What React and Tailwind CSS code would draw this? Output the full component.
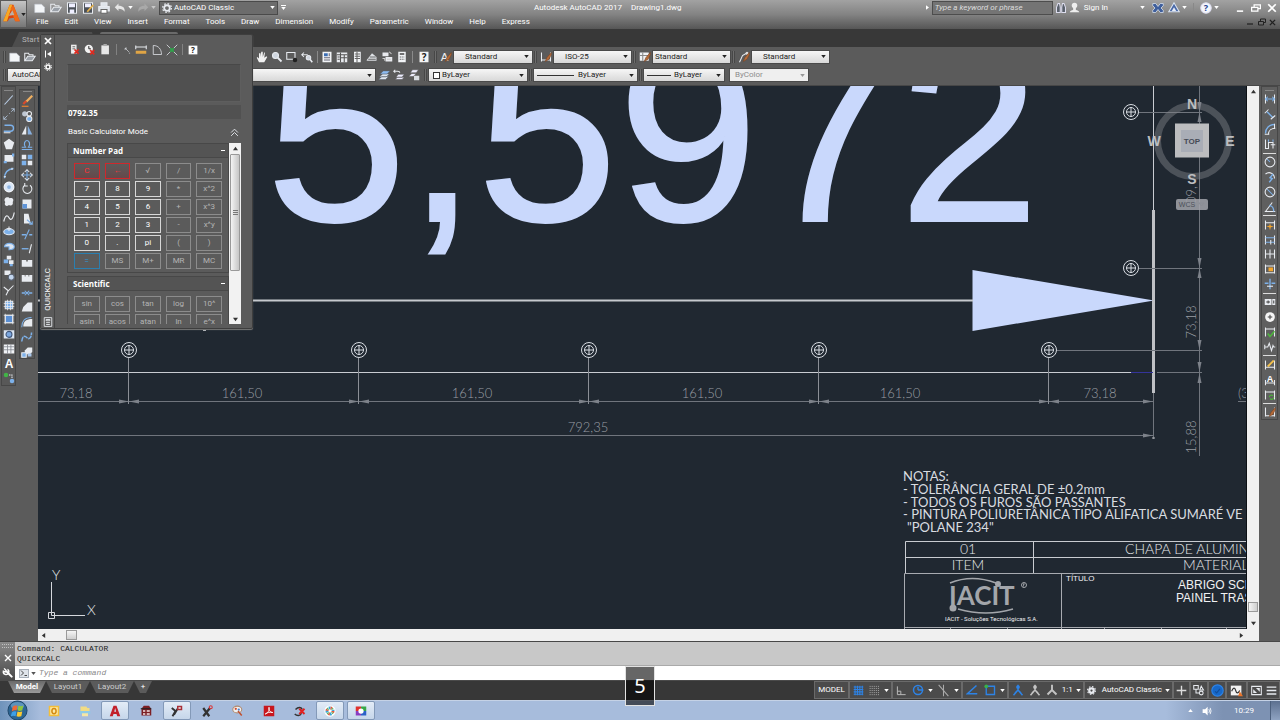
import React from "react";

const W = "#e8ebf0";
const B = "#7db1ea";

function Ico({ children, s = 12 }) {
  return (
    <svg viewBox="0 0 16 16" width={s} height={s} fill="none" stroke={W} strokeWidth="1.4" className="shrink-0" aria-hidden="true">
      {children}
    </svg>
  );
}

function Tool({ label, children, className = "w-[15px]", s }) {
  return (
    <button type="button" aria-label={label} className={`flex shrink-0 items-center justify-center ${className}`}>
      <Ico s={s}>{children}</Ico>
    </button>
  );
}

const Caret = ({ className = "text-white" }) => (
  <svg viewBox="0 0 6 4" className={`h-[3px] w-[5px] shrink-0 ${className}`} aria-hidden="true">
    <path d="M0 0h6L3 4z" fill="currentColor" />
  </svg>
);

const fill = (c) => ({ fill: c, stroke: "none" });

/* Shared drawings */
const NewDoc = <path d="M1 3h9l4 4v7H1z" fill="#f4f6f8" stroke="#c9ced6" strokeWidth=".8" />;
const OpenDoc = (
  <>
    <path d="M1 13V3h5l1 2h5v2" />
    <path d="M1 13l4-6h10l-4 6z" fill="#9aa0a8" />
  </>
);
const Layers = (
  <>
    <path d="M1 14l4-4h9l-4 4zM2 10.500l4-4h9l-4 4z" fill="#dfe6ef" stroke="#59616c" strokeWidth=".7" />
    <path d="M3 6.500l4-4h9l-4 4z" fill="#8dbcf2" stroke="#59616c" strokeWidth=".7" />
  </>
);
const Brush = <path d="M15 2l-6 7-2 5 5-3 3-6z" fill="#b56a38" stroke="#7a4524" strokeWidth=".8" />;

const drawTools = [
  ["Line", <path d="M2 14L13 2" stroke="#bcd0ea" />],
  ["Construction line", <path d="M1 15l5-5M8 8l1-1M11 5l4-4M1 11v4h4M11 1h4v4" strokeWidth="1" stroke="#bcd0ea" />],
  ["Polyline", <><path d="M2 3h8a4 4 0 010 8H1" stroke={B} strokeWidth="1.800" /><path d="M1 13h9" /></>],
  ["Polygon", <path d="M8 1l7 5-3 9H4L1 6z" {...fill(W)} />],
  ["Rectangle", <><path d="M2 4h12v9H2z" {...fill(W)} /><path d="M1 12h4v3H1zM12 2h3v4h-3z" {...fill(B)} /></>],
  ["Arc", <><path d="M2 15C2 8 6 3 14 2" stroke={B} strokeWidth="1.800" /><path d="M1 13h3M12 1v3" /></>],
  ["Circle", <><circle cx="8" cy="8" r="6.500" fill="#d9e6f6" stroke="#f4f7fb" /><circle cx="8" cy="8" r="2.500" {...fill("#8fb5e2")} /></>],
  ["Revision cloud", <path d="M4 2c3-1 4 0 5 1 4-1 6 2 4 5 1 4-2 6-5 4-4 3-7 0-5-4-2-2-1-5 1-6z" {...fill(W)} />],
  ["Spline", <path d="M1 14c2-9 5-9 7-5s5 3 7-7" strokeWidth="1.600" />],
  ["Ellipse", <><ellipse cx="8" cy="9" rx="7" ry="4" fill={B} stroke="#dfe9f6" /><path d="M8 2v6M5 5h6" /></>],
  ["Ellipse arc", <path d="M2 9c0-6 13-6 13 0 0 3-4 4-7 4v-4z" fill="#dbe5f2" stroke={B} />],
  ["Insert block", <><path d="M5 1h6v5H5zM8 7h6v5H8z" {...fill(W)} /><path d="M1 6h6v5H1zM9 12h4v3H9z" {...fill(B)} /></>],
  ["Make block", <><path d="M2 2h8v6H2z" {...fill(W)} /><circle cx="11" cy="11" r="4" fill="#c2d5ee" stroke="#586170" /></>],
  ["Point", <path d="M1 4l6 5 7-7M7 9l-3 6" />],
  ["Hatch", <><path d="M3 3h10v10H3z" fill={B} /><path d="M1 6h14M1 10h14M6 1v14M10 1v14" strokeWidth="1" /></>],
  ["Gradient", <><path d="M3 3h10v10H3z" fill="#5a8fd4" /><path d="M1 3h14M1 13h14M3 1v14M13 1v14" strokeWidth="1" /></>],
  ["Region", <><path d="M1 3h14v11H1z" fill="#dbe5f2" stroke="none" /><circle cx="8" cy="8.500" r="4" fill="#7ba7df" stroke="#40567a" /></>],
  ["Table", <><path d="M1 2h14v12H1z" {...fill("#f1f3f6")} /><path d="M1 5h14M1 9h14M6 2v12M10.500 2v12" stroke="#7d828a" strokeWidth="1" /></>],
  ["Multiline text", <text x="8" y="14" textAnchor="middle" fontSize="16" fontWeight="700" fontFamily="Liberation Sans, sans-serif" {...fill("#fff")}>A</text>],
  ["Add selected", <><circle cx="4" cy="4" r="3" {...fill("#41b446")} /><path d="M8 4h4v4" strokeDasharray="2 1" /><circle cx="12" cy="12" r="3" {...fill(B)} /></>],
];

const modifyTools = [
  ["Erase", <><path d="M15 1L7 9" stroke="#f0b060" strokeWidth="3" /><path d="M7 8l-4 4" stroke="#d84b2c" strokeWidth="3" /><path d="M1 15h9" stroke="#ff8a2a" /></>],
  ["Copy", <><circle cx="5" cy="5" r="3.500" {...fill("#bfc7d2")} /><circle cx="11" cy="5" r="3" stroke={W} /><circle cx="11" cy="12" r="3.500" fill={B} /></>],
  ["Mirror", <><path d="M7 2v12H1z" {...fill(W)} /><path d="M9 2v12h6z" {...fill("#86aede")} /></>],
  ["Offset", <path d="M1 14h14M1 11h5C3 7 5 2 8 2s5 5 2 9h5" stroke={B} strokeWidth="1.600" />],
  ["Array", <><path d="M1 1h6v6H1zM9 9h6v6H9z" {...fill(W)} /><path d="M9 1h6v6H9zM1 9h6v6H1z" {...fill(B)} /></>],
  ["Move", <><path d="M8 1v14M1 8h14" stroke={B} /><path d="M5 4l3-3 3 3M5 12l3 3 3-3M4 5L1 8l3 3M12 5l3 3-3 3" /></>],
  ["Rotate", <path d="M12 3a6 6 0 11-7 0M5 0v4h4" />],
  ["Scale", <><path d="M2 2h12v12H2z" {...fill(W)} /><path d="M2 8h6v6H2z" {...fill("#5f94d8")} /></>],
  ["Stretch", <><path d="M4 1h6l3 13H4z" {...fill(W)} /><path d="M8 9l7 6M15 11v4h-4" stroke={B} /></>],
  ["Trim", <><path d="M1 9h6M11 9h4" stroke={B} strokeWidth="1.800" /><path d="M5 15L11 2" stroke={B} /></>],
  ["Extend", <><path d="M1 9h9" stroke={B} strokeWidth="1.800" /><path d="M11 15l3-12" /></>],
  ["Break at point", <path d="M1 4h6v2h2V4h6v9H1z" {...fill(W)} />],
  ["Break", <path d="M1 4h4v2h1V4h4v2h1V4h4v9H1z" {...fill(W)} />],
  ["Join", <><path d="M1 8h5M10 8h5" stroke={B} strokeWidth="2" /><path d="M5 5l3 3-3 3M11 5L8 8l3 3" stroke={B} /></>],
  ["Chamfer", <path d="M1 14L3 8l6-6h6v12z" {...fill(W)} />],
  ["Fillet", <><path d="M3 14c0-7 4-10 12-10v10z" {...fill(W)} /><path d="M1 15C1 7 5 2 14 2" stroke={B} /></>],
  ["Blend curves", <path d="M1 14c1-8 4-8 7-5s6 0 6-7" stroke={B} strokeWidth="2" strokeDasharray="6 1" />],
  ["Explode", <><path d="M5 6l4-4h6v6l-3 3H5z" {...fill(W)} /><path d="M1 9h6v6H1z" fill={B} /><path d="M9 10h5v4H9z" {...fill("#a8c5e9")} /></>],
];

const H = <path d="M2 2v12M14 2v12" />;
const dimTools = [
  ["Linear", <>{H}<path d="M2 8h12M5 5L2 8l3 3M11 5l3 3-3 3" stroke={B} /></>],
  ["Aligned", <><path d="M4 5l8 8" stroke={B} strokeWidth="2" /><path d="M1 7l5-5M9 15l6-5" /></>],
  ["Arc length", <><path d="M2 14C2 7 7 2 14 2" stroke={B} strokeWidth="1.800" /><path d="M6 15c0-5 4-8 9-8" /><path d="M1 15h6M14 1v7" /></>],
  ["Ordinate", <><path d="M2 2v12h4V6h6v8M9 9h6" /><path d="M6 2v3M12 2v3" stroke={B} /></>],
  null,
  ["Radius", <><circle cx="8" cy="8" r="6.500" /><path d="M8 8L4 4" stroke={B} /></>],
  ["Jogged", <><path d="M2 4c5-4 12-1 12 6" /><path d="M12 4L8 9l3 1-4 5" stroke={B} strokeWidth="1.800" /></>],
  ["Diameter", <><circle cx="8" cy="8" r="6.500" /><path d="M4 4l8 8" stroke={B} /></>],
  ["Angular", <><path d="M1 14h14M2 14L11 2" /><path d="M7 6c4 0 6 4 6 8" stroke={B} strokeWidth="1.800" /></>],
  null,
  ["Quick dimension", <>{H}<path d="M2 5h12" /><path d="M8 6l1 3 4 1-4 1-1 4-1-4-4-1 4-1z" {...fill("#f3a52c")} /></>],
  ["Baseline", <>{H}<path d="M2 5h12M2 11h12" stroke={B} /><path d="M9 8v6" /></>],
  ["Continue", <>{H}<path d="M2 8h12M8 2v12" /></>],
  ["Dimension space", <>{H}<path d="M2 4h12M2 13h12" /><path d="M6 6h6v5H6z" {...fill("#f3a52c")} /></>],
  ["Dimension break", <><path d="M1 7h5M10 7h5M8 1v14" stroke={B} strokeWidth="1.800" /><path d="M4 11h8" /></>],
  null,
  ["Tolerance", <><path d="M1 4h9v8H1zM11 4h4v8h-4z" {...fill(W)} /><path d="M3 8h5M5.500 6v4M13 6v4" stroke="#444" /></>],
  ["Center mark", <><circle cx="8" cy="8" r="6.500" {...fill("#f5f5f5")} /><path d="M8 5v6M5 8h6" stroke="#444" /></>],
  ["Inspection", <>{H}<path d="M2 4h12" /><path d="M5 10l3 4 6-7" stroke="#4db53c" strokeWidth="2" /></>],
  ["Jogged linear", <path d="M1 5v6M1 8h4l2-5 3 10 2-7 1 2h2" />],
  null,
  ["Dimension edit", <>{H}<path d="M2 11h12" /><path d="M5 10l8-8" stroke="#f3c04c" strokeWidth="2.500" /></>],
  ["Dimension text edit", <><path d="M2 8v7M14 8v7M2 12h12" /><text x="8" y="10" textAnchor="middle" fontSize="12" fontWeight="700" fontFamily="Liberation Sans, sans-serif" {...fill("#fff")}>A</text></>],
  ["Dimension update", <>{H}<path d="M2 4h12" /><path d="M7 11a3 3 0 015-2M13 11a3 3 0 01-5 2" stroke="#4db53c" /></>],
  null,
  ["Dimension style", <>{H}<path d="M2 13h12" />{Brush}</>],
];

const Hand = <path d="M4 15L1 9l1-1 2 2V3h2v5l1-7h2v7l2-6h1l-1 7 3-2 1 1-4 7z" {...fill("#f2f2f2")} />;
const Zoom = <><circle cx="6" cy="6" r="4" fill="#cfd6df" /><path d="M9 9l5 5" strokeWidth="2.400" /></>;

function Combo({ label, value, className, pad = "pl-2", line, swatch, disabled }) {
  return (
    <div className={`relative flex h-[14px] shrink-0 items-center border border-[#4a4a4a] ${disabled ? "bg-[#efefef] text-[#8c8c8c]" : "bg-linear-to-b from-[#f6f6f6] to-[#d8d8d8] text-[#1c1c1c]"} ${className}`}>
      {line && <span className={`ml-[3px] h-px shrink-0 bg-[#333] ${line}`} />}
      {swatch && <span className="ml-[4px] size-[7px] shrink-0 border border-[#333] bg-white" />}
      <select aria-label={label} disabled={disabled} className={`h-full min-w-0 flex-1 appearance-none bg-transparent text-[8px] leading-[12px] outline-none ${pad}`}>
        <option>{value}</option>
      </select>
      <span className="pointer-events-none absolute right-[3px]"><Caret className={disabled ? "text-[#999]" : "text-[#222]"} /></span>
    </div>
  );
}

const Grip = () => <span className="mx-px h-[12px] w-[3px] shrink-0 border-x border-[#474747] bg-[#6d6d6d]" />;
const Sep = () => <span className="mx-px h-[12px] w-px shrink-0 bg-[#8a8a8a]" />;

function Header() {
  const menus = ["File", "Edit", "View", "Insert", "Format", "Tools", "Draw", "Dimension", "Modify", "Parametric", "Window", "Help", "Express"];
  return (
    <header className="flex h-[29px] bg-linear-to-b from-[#a2a2a2] via-[#838383] to-[#565656] text-white">
      <button type="button" aria-label="Application menu" className="flex h-[28px] w-[27px] shrink-0 items-center border border-[#5a5a5a] bg-linear-to-b from-[#c4c4c4] to-[#777] pl-px">
        <svg viewBox="0 0 20 24" className="h-[22px] w-[19px]" aria-hidden="true">
          <path d="M1 20L8 2h4l7 18h-5l-1.500-4-5 1L6 20z" fill="#d9420f" />
          <path d="M1 20L8 2h3L5 20z" fill="#f7a823" />
          <path d="M12 2l7 18h-5L9 6z" fill="#ee6a17" />
          <path d="M7 14l4-6 2 5z" fill="#b9b0a8" />
        </svg>
        <Caret className="text-[#222]" />
      </button>
      <div className="flex min-w-0 flex-1 flex-col">
        <div className="relative flex h-[15px] items-center">
          <div className="flex items-center pl-[5px]">
            <Tool label="New" className="w-[16px]">{NewDoc}</Tool>
            <Tool label="Open" className="w-[16px]">{OpenDoc}</Tool>
            <Tool label="Save" className="w-[16px]"><path d="M2 1h12v14H2z" fill="#4a5058" /><path d="M4 2h8v5H4zM5 10h6v5H5z" {...fill("#eef")} /></Tool>
            <Tool label="Save as" className="w-[16px]"><path d="M2 1h12v14H2z" fill="#4a5058" /><path d="M4 2h8v5H4z" {...fill("#eef")} /><path d="M7 13l8-9" stroke="#e2b04c" strokeWidth="2.500" /></Tool>
            <Tool label="Plot" className="w-[16px]"><path d="M4 1h8v5H4zM1 6h14v6H1z" fill="#dfe4ea" /><path d="M4 10h8v5H4z" fill="#fff" stroke="#666" /></Tool>
            <Tool label="Undo" className="w-[16px]"><path d="M1 7l5-5v3c6 0 9 3 8 8-2-3-4-4-8-4v3z" {...fill("#e6e6e6")} /></Tool>
            <Caret />
            <Tool label="Redo" className="ml-[2px] w-[16px]"><path d="M15 7l-5-5v3C4 5 1 8 2 13c2-3 4-4 8-4v3z" {...fill("#a9a9a9")} /></Tool>
            <Caret className="text-[#c8c8c8]" />
            <div className="relative ml-[3px] flex h-[14px] w-[119px] items-center border border-[#4a4a4a] bg-[#6c6c6c] pl-[2px]">
              <Ico s={10}><circle cx="8" cy="8" r="4.500" strokeWidth="3" /><circle cx="8" cy="8" r="7" strokeWidth="2" strokeDasharray="2.700 2.800" /></Ico>
              <select aria-label="Workspace" className="h-full min-w-0 flex-1 appearance-none bg-transparent pl-[2px] text-[8px] leading-[12px] outline-none">
                <option>AutoCAD Classic</option>
              </select>
              <span className="pointer-events-none absolute right-[2px]"><Caret /></span>
            </div>
            <button type="button" aria-label="Customize" className="ml-[3px] flex flex-col items-center gap-px"><span className="h-px w-[5px] bg-white" /><Caret /></button>
          </div>
          <div className="ml-[248px] flex gap-[9px] text-[8px] whitespace-nowrap"><span>Autodesk AutoCAD 2017</span><span>Drawing1.dwg</span></div>
          <div className="ml-auto flex items-center">
            <svg viewBox="0 0 4 6" className="mr-[3px] h-[5px] w-[3px]" aria-hidden="true"><path d="M0 0v6l4-3z" fill="#fff" /></svg>
            <input aria-label="Search" placeholder="Type a keyword or phrase" className="h-[14px] w-[121px] border border-[#4d4d4d] bg-[#747474] pl-[2px] text-[8px] italic outline-none placeholder:text-[#dcdcdc]" />
            <Tool label="Find" className="ml-[1px] w-[15px]"><path d="M2 14V7l2-5h2l1 5v7zM9 14V7l1-5h2l2 5v7z" fill="#59606b" stroke="#dde" /></Tool>
            <button type="button" className="flex items-center gap-[4px] text-[8px] whitespace-nowrap">
              <Ico s={11}><circle cx="8" cy="5" r="4" {...fill("#eee")} /><path d="M1 15c1-5 13-5 14 0zM6 8h4v4H6z" {...fill("#eee")} /></Ico>
              Sign In
            </button>
            <span className="ml-[32px] flex"><Caret /></span>
            <Tool label="Exchange" className="ml-[5px] w-[16px]"><path d="M1 2h4l3 4 3-4h4v3l-3 3 3 3v3h-4l-3-4-3 4H1v-3l3-3-3-3z" fill="#3f5f9c" stroke="#dbe4f2" strokeWidth="1" /></Tool>
            <Tool label="Stay connected" className="w-[16px]"><path d="M8 1l7 12H1z" fill="#4868a6" stroke="#dbe4f2" /><path d="M8 7l3 5H5z" {...fill("#e8edf6")} /></Tool>
            <Caret />
            <span className="ml-[6px] h-[10px] w-px bg-[#888]" />
            <Tool label="Help" className="ml-[4px] w-[15px]" s={12}><circle cx="8" cy="8" r="7" fill="#f4f7fc" stroke="#dde" /><text x="8" y="12" textAnchor="middle" fontSize="12" fontWeight="700" fontFamily="Noto Sans, sans-serif" {...fill("#1d3f8f")}>?</text></Tool>
            <span className="ml-px flex"><Caret /></span>
            <Tool label="Minimize" className="ml-[13px] w-[16px]" s={10}><path d="M3 13h10" stroke="#fff" strokeWidth="2.500" /></Tool>
            <Tool label="Restore" className="w-[16px]" s={10}><path d="M5 6V3h10v6h-3M1 7h10v6H1z" stroke="#fff" strokeWidth="2" /></Tool>
            <Tool label="Close" className="w-[16px]" s={10}><path d="M2 2l12 12M14 2L2 14" stroke="#fff" strokeWidth="2.800" /></Tool>
          </div>
        </div>
        <nav className="flex h-[14px] items-center gap-[16px] pl-[9px] text-[8px]">
          {menus.map((m) => <button type="button" key={m}>{m}</button>)}
          <span className="ml-auto flex pr-[2px]">
            <Tool label="Minimize drawing" className="w-[12px]" s={8}><path d="M2 12h12" stroke="#222" strokeWidth="2.500" /></Tool>
            <Tool label="Restore drawing" className="w-[11px]" s={8}><path d="M5 6V2h10v7h-3M1 7h10v7H1z" stroke="#222" strokeWidth="2" /></Tool>
            <Tool label="Close drawing" className="w-[11px]" s={7}><path d="M2 2l12 12M14 2L2 14" stroke="#222" strokeWidth="3" /></Tool>
          </span>
        </nav>
      </div>
    </header>
  );
}

function Toolbars() {
  return (
    <section className="flex h-[39px] flex-col border-b border-[#474747] bg-[#5b5b5b] pt-px text-[#1c1c1c]">
      <div className="flex h-[18px] items-center pl-[2px]">
        <Grip />
        <Tool label="New drawing" className="w-[15px]">{NewDoc}</Tool>
        <Tool label="Open drawing" className="w-[15px]">{OpenDoc}</Tool>
        <span className="w-[217px] shrink-0" />
        <Tool label="Pan">{Hand}</Tool>
        <Tool label="Zoom realtime">{Zoom}</Tool>
        <Tool label="Zoom window"><path d="M1 2h11v9H1z" /><circle cx="12" cy="12" r="3" {...fill("#222")} /></Tool>
        <Tool label="Zoom previous"><path d="M1 5h8M4 2L1 5l3 3" /><circle cx="10" cy="9" r="3" fill="#cfd6df" /><path d="M12 11l3 4" strokeWidth="2" /></Tool>
        <span className="w-[2px]" /><Sep />
        <Tool label="Properties"><path d="M2 1h12v14H2z" {...fill("#f2f4f7")} /><path d="M4 3h5v4H4z" {...fill("#3c6fb5")} /><path d="M4 9h8M4 12h8M11 3v4" stroke="#667" /></Tool>
        <Tool label="Design center"><path d="M1 2h14v13H1z" {...fill("#e8eaee")} /><path d="M1 5h14M6 2v13M11 5v10M6 9h9M2 8h3M2 11h3" stroke="#555" /></Tool>
        <Tool label="Tool palettes"><path d="M4 1h9v14H4z" {...fill("#f2f4f7")} /><path d="M5 4h7M5 7h7M5 10h7M8 1v14" stroke="#666" /></Tool>
        <Tool label="Sheet set"><path d="M1 12L8 3l6 5v5H1z" {...fill("#dfe2e6")} /><path d="M3 11h10M5 8h8" stroke="#666" /></Tool>
        <Tool label="Markup"><path d="M2 2h8v5H2zM6 8h9v6H6z" {...fill("#e8eaee")} /><path d="M11 1l3 3M2 10h3v3M8 11h5" stroke="#ccc" /></Tool>
        <Tool label="Calculator"><path d="M3 1h10v14H3z" {...fill("#f2f4f7")} /><path d="M5 4h6" stroke="#444" strokeWidth="2" /><path d="M5 8h6M5 11h6" stroke="#555" strokeDasharray="1.500 1" /></Tool>
        <span className="w-[2px]" /><Sep />
        <Tool label="Toolbar help" className="w-[19px]"><path d="M2 1h12v14H2z" {...fill("#f4f4f4")} /><text x="8" y="13" textAnchor="middle" fontSize="13" fontWeight="700" fontFamily="Noto Sans, sans-serif" {...fill("#222")}>?</text></Tool>
        <Grip />
        <Tool label="Text style" className="w-[15px]"><text x="6" y="13" textAnchor="middle" fontSize="15" fontFamily="Liberation Sans, sans-serif" {...fill("#eee")}>A</text>{Brush}</Tool>
        <Combo label="Text style" value="Standard" className="w-[80px]" pad="pl-[11px]" />
        <Grip />
        <Tool label="Dimension style">{H}<path d="M2 12h12" />{Brush}</Tool>
        <Combo label="Dimension style" value="ISO-25" className="w-[79px]" pad="pl-[11px]" />
        <Grip />
        <Tool label="Table style"><path d="M1 2h12v11H1z" {...fill("#f1f3f6")} /><path d="M1 6h12M5 2v11" stroke="#888" />{Brush}</Tool>
        <Combo label="Table style" value="Standard" className="w-[79px]" pad="pl-[2px]" />
        <Grip />
        <Tool label="Leader style"><path d="M2 15l4-9 7-4" /><circle cx="12" cy="3" r="2" {...fill("#ddd")} />{Brush}</Tool>
        <Combo label="Leader style" value="Standard" className="w-[79px]" pad="pl-[11px]" />
      </div>
      <div className="flex h-[20px] items-center pl-[2px]">
        <Grip />
        <Combo label="Workspaces" value="AutoCAD Classic" className="w-[114px]" pad="pl-[4px]" />
        <Grip />
        <Combo label="Layer" value="" className="w-[250px]" />
        <Tool label="Make layer current">{Layers}</Tool>
        <Tool label="Layer previous"><path d="M1 3h5M3 1L1 3l2 2M6 3q3 0 3 2" /><path d="M3 14l3-3h9l-3 3zM4 11l3-4h8l-3 4z" fill="#eef" stroke="#555" strokeWidth=".7" /></Tool>
        <Tool label="Layer states"><path d="M3 5l3-4h8l-3 4zM1 10l4-4h6l-4 4z" fill="#eef" stroke="#555" strokeWidth=".7" /><path d="M8 9h7v6H8z" {...fill("#d8dce2")} /></Tool>
        <span className="w-[2px]" />
        <Grip />
        <Combo label="Color" value="ByLayer" className="w-[100px]" pad="pl-[2px]" swatch />
        <Grip />
        <Combo label="Linetype" value="ByLayer" className="w-[105px]" pad="pl-[4px]" line="w-[37px]" />
        <Grip />
        <Combo label="Lineweight" value="ByLayer" className="w-[82px]" pad="pl-[3px]" line="w-[24px]" />
        <span className="w-[4px]" />
        <Combo label="Plot style" value="ByColor" className="w-[80px]" pad="pl-[5px]" disabled />
      </div>
    </section>
  );
}

const HOLES = [129, 359, 589, 819, 1049];
const GOTHIC = "Lato, 'Open Sans', sans-serif";

const Target = ({ x, y }) => (
  <g stroke="#d9dde3" fill="none">
    <circle cx={x} cy={y} r="7.500" />
    <circle cx={x} cy={y} r="4.500" />
    <path d={`M${x - 5} ${y}h10M${x} ${y - 5}v10`} />
  </g>
);

function Drawing() {
  const hArrow = (x, y, dir) => <path key={`${x}${y}${dir}`} d={`M${x} ${y}l${dir * 10} -2v4z`} fill="#7d828a" />;
  const vArrow = (y, dir) => <path key={`${y}${dir}`} d={`M1199.500 ${y}l-2 ${dir * 10}h4z`} fill="#7d828a" />;
  const gray = "#9a9ea4";
  return (
    <svg className="absolute inset-0 h-full w-full" role="img" aria-label="Drawing1.dwg model space">
      <g transform="translate(-38 -86)">
        <g fill="#c9d8fc">
          <text x="266" y="221" fontSize="253" fontFamily="Liberation Sans, Arial, sans-serif" stroke="#c9d8fc" strokeWidth="2">5,5972</text>
          <path d="M972.500 270L1154 300.500 972.500 331z" />
        </g>
        <path d="M38 300.500h935" stroke="#c6c9ce" strokeWidth="2" />
        <path d="M38 372.500h1116M1153.500 86v125" stroke="#c9ccd2" />
        <path d="M1153.500 210v183" stroke="#bfc1c5" strokeWidth="3" />
        <path d="M1131 372.500h22" stroke="#34349a" />
        <g stroke="#70757d" fill="none">
          <path d="M38 401.500h1116M38 435.500h1116M1153.500 393v46" />
          <path d="M1199.500 86v370M1139 112.500h63M1139 268.500h63M1057 350.500h145M1157 372.500h45M1238 401.500h9" />
          {HOLES.map((x) => <path key={x} d={`M${x - 0.5} 358v46`} stroke="#8b8f96" />)}
        </g>
        {HOLES.map((x) => <g key={x}>{hArrow(x, 401.5, -1)}{hArrow(x, 401.5, 1)}<Target x={x} y={350} /></g>)}
        {hArrow(1153, 401.5, -1)}{hArrow(1153, 435.5, -1)}
        {vArrow(112, -1)}{vArrow(112, 1)}{vArrow(268, -1)}{vArrow(268, 1)}{vArrow(350, -1)}{vArrow(372, -1)}{vArrow(373, 1)}
        <path d="M1152 438h3M203 330.500h3" stroke="#b5b8bd" />
        <Target x={1131} y={112} />
        <Target x={1131} y={268} />
        <g fill={gray} fontSize="13" fontWeight="300" fontFamily={GOTHIC} textAnchor="middle">
          <text x="76" y="398">73,18</text>
          <text x="242" y="398">161,50</text>
          <text x="472" y="398">161,50</text>
          <text x="702" y="398">161,50</text>
          <text x="900" y="398">161,50</text>
          <text x="1100" y="398">73,18</text>
          <text x="588" y="432">792,35</text>
          <text transform="translate(1196 322) rotate(-90)">73,18</text>
          <text transform="translate(1196 437) rotate(-90)">15,88</text>
          <text transform="translate(1196 195) rotate(-90)">09,</text>
          <text x="1238" y="398" textAnchor="start">(3</text>
        </g>
        <g fontFamily="Liberation Sans, Arial, sans-serif" textAnchor="middle">
          <circle cx="1193" cy="141" r="35.500" fill="none" stroke="#82858c" strokeOpacity=".45" strokeWidth="7" />
          <path d="M1175 123.500h34v34h-34z" fill="#bcbdbf" />
          <path d="M1181 130h22v22h-22z" fill="#a9adb6" />
          <text x="1192" y="144" fontSize="8" fontWeight="700" fill="#454a55">TOP</text>
          <g fontSize="14" fontWeight="700" fill="#bdbec0">
            <text x="1192" y="109">N</text>
            <text x="1192" y="184">S</text>
            <text x="1154" y="146">W</text>
            <text x="1230" y="146">E</text>
          </g>
          <rect x="1176" y="199" width="32" height="11" rx="2" fill="#a3a5ac" fillOpacity=".85" />
          <text x="1187" y="207" fontSize="7" fill="#4b4f58">WCS</text>
          <path d="M1199 203h5l-2.500 3z" fill="none" stroke="#8b8e96" />
        </g>
        <path d="M51.500 582v33.500H85M48.500 612.500h6v6h-6z" stroke="#d5d8dd" fill="none" />
        <g fill="#e6e8eb" fontSize="14" fontWeight="300" fontFamily={GOTHIC}>
          <text x="52" y="580">Y</text>
          <text x="87" y="615">X</text>
          <g fontSize="13" fontWeight="400" fill="#d9dce0">
            <text x="903" y="481">NOTAS:</text>
            <text x="903" y="494">- TOLERÂNCIA GERAL DE ±0.2mm</text>
            <text x="903" y="507">- TODOS OS FUROS SÃO PASSANTES</text>
            <text x="903" y="519">- PINTURA POLIURETÂNICA TIPO ALIFATICA SUMARÉ VE</text>
            <text x="907" y="532">"POLANE 234"</text>
          </g>
          <text x="968" y="554" textAnchor="middle">01</text>
          <text x="968" y="570" textAnchor="middle">ITEM</text>
          <text x="1125" y="554">CHAPA DE ALUMIN</text>
          <text x="1183" y="570">MATERIAL</text>
        </g>
        <g stroke="#c9ccd1" fill="none">
          <path d="M905.500 573v-31.500H1260M905 557.500h355M1033.500 541v32" />
          <path d="M904.500 629v-55.500H1260M1061.500 573v56M904 627.500h356" stroke="#a8abb1" />
          <path d="M950.500 627v2M1007.500 627v2M1104.500 627v2M1161.500 627v2M1226.500 627v2" stroke="#a8abb1" />
        </g>
        <g fontFamily="Liberation Sans, Arial, sans-serif" fill="#f0f1f3">
          <text x="1066" y="581" fontSize="8">TÍTULO</text>
          <text x="1178" y="589" fontSize="12">ABRIGO SCE</text>
          <text x="1176" y="602" fontSize="12">PAINEL TRAS</text>
          <text x="945" y="621" fontSize="6" fontFamily="Roboto, sans-serif">IACIT - Soluções Tecnológicas S.A.</text>
        </g>
        <g fill="#a3a6ab">
          <text x="949" y="605" fontSize="26" fontWeight="700" fontFamily="Lato, sans-serif">IACIT</text>
          <circle cx="953" cy="608" r="3.500" />
          <circle cx="998" cy="584" r="3" />
          <path d="M950 583q22-9 46 0M958 609q28 8 55 0" fill="none" stroke="#a3a6ab" strokeWidth="1.500" />
          <circle cx="1024" cy="585" r="2.500" fill="none" stroke="#a3a6ab" />
          <path d="M1023.500 583.500v3M1023.500 584h1.500" stroke="#a3a6ab" strokeWidth=".8" />
        </g>
      </g>
    </svg>
  );
}

const Arrow = ({ d }) => <svg viewBox="0 0 6 6" className="size-[5px] shrink-0" aria-hidden="true"><path d={d} fill="#333" /></svg>;

function Workspace() {
  return (
    <main className="flex flex-1 border-b border-[#474747] bg-[#5b5b5b]">
      <aside className="flex w-[38px] shrink-0 items-start gap-[3px] pl-px">
        <div className="flex h-[300px] w-[15px] flex-col items-center justify-between border border-[#474747] bg-[#585858] pt-[3px] pb-px">
          <span className="h-px w-[9px] bg-[#888]" />
          {drawTools.map(([n, d]) => <Tool key={n} label={n} className="w-[13px]">{d}</Tool>)}
        </div>
        <div className="mt-[3px] flex h-[270px] w-[16px] flex-col items-center justify-between border border-[#474747] bg-[#585858] pt-px">
          <span className="h-px w-[9px] bg-[#888]" />
          {modifyTools.map(([n, d]) => <Tool key={n} label={n} className="w-[14px]">{d}</Tool>)}
        </div>
      </aside>
      <div className="flex min-w-0 flex-1 flex-col">
        <div className="flex flex-1">
          <div className="relative min-w-0 flex-1 overflow-hidden border-r border-[#0c1014] bg-[#202831]"><Drawing /></div>
          <div className="flex w-[12px] shrink-0 flex-col items-center justify-between bg-[#f0f0f0] py-[3px]">
            <Arrow d="M3 1L6 5H0z" />
            <span className="flex flex-col items-center gap-[9px]"><span className="h-[10px] w-[10px] border border-[#9a9a9a] bg-linear-to-r from-[#f5f5f5] to-[#cfcfcf]" /><Arrow d="M3 5L0 1h6z" /></span>
          </div>
        </div>
        <div className="flex h-[12px] items-center bg-[#f0f0f0] pr-[15px] pl-[3px]">
          <Arrow d="M1 3l4-3v6z" />
          <span className="ml-[20px] h-[10px] w-[11px] border border-[#9a9a9a] bg-linear-to-b from-[#f5f5f5] to-[#cfcfcf]" />
          <span className="ml-auto flex"><Arrow d="M5 3L1 0v6z" /></span>
        </div>
      </div>
      <aside className="flex w-[21px] shrink-0 items-start justify-center">
        <div className="flex h-[334px] w-[17px] flex-col items-center justify-between border border-[#474747] bg-[#5f5f5f] pt-[3px]">
          <span className="h-px w-[9px] bg-[#888]" />
          {dimTools.map((t, i) => t
            ? <Tool key={t[0]} label={t[0]} className="h-[13px] w-[15px]">{t[1]}</Tool>
            : <span key={i} className="h-px w-[13px] bg-[#ddd]" />)}
        </div>
      </aside>
    </main>
  );
}

const padKeys = ["C", "←", "√", "/", "1/x", "7", "8", "9", "*", "x^2", "4", "5", "6", "+", "x^3", "1", "2", "3", "-", "x^y", "0", ".", "pi", "(", ")", "=", "MS", "M+", "MR", "MC"];
const sciKeys = ["sin", "cos", "tan", "log", "10^", "asin", "acos", "atan", "ln", "e^x"];

function keyStyle(k) {
  if (k === "C" || k === "←") return "border-[#d0282c] bg-linear-to-b from-[#5b5b5b] to-[#66484a] text-[#ff3236]";
  if (k === "=") return "border-[#2b7fb0] text-[#2b9cdc]";
  if (/^(\d|\.|pi)$/.test(k)) return "border-[#d8d8d8] text-white";
  return "border-[#8c8c8c] text-[#b4b4b4]";
}

function Section({ title, keys }) {
  return (
    <section className="border border-[#484848] bg-[#5b5b5b]">
      <h3 className="flex h-[14px] items-center justify-between border-b border-[#484848] bg-[#545454] pr-[3px] pl-[5px] font-['Open_Sans',sans-serif] text-[8px] font-bold text-white">
        {title}<span className="h-px w-[4px] bg-white" />
      </h3>
      <div className="grid grid-cols-5 gap-x-[5px] gap-y-[2px] px-[6px] pt-[5px] pb-[3px]">
        {keys.map((k) => (
          <button type="button" key={k} className={`flex h-[16px] items-center justify-center border text-[8px] leading-none ${keyStyle(k)}`}>{k}</button>
        ))}
      </div>
    </section>
  );
}

function QuickCalc() {
  return (
    <section aria-label="QuickCalc" className="absolute top-[34px] left-[40px] flex h-[295px] w-[213px] rounded-[2px] border border-[#3e3e3e] bg-[#5b5b5b] shadow-[0_1px_1px_#777]">
      <div className="flex w-[14px] shrink-0 flex-col items-center border-r border-[#444] bg-[#5a5a5a] pt-px">
        <Tool label="Close palette" className="h-[10px] w-[12px]" s={8}><path d="M2 2l12 12M14 2L2 14" stroke="#fff" strokeWidth="3.500" /></Tool>
        <Tool label="Auto-hide" className="mt-[3px] h-[10px] w-[12px]" s={8}><path d="M3 1v14" stroke="#fff" strokeWidth="2" /><path d="M14 3v10L6 8z" {...fill("#fff")} /></Tool>
        <Tool label="Palette properties" className="mt-[3px] h-[10px] w-[12px]" s={8}><circle cx="8" cy="8" r="4" stroke="#fff" strokeWidth="3" /><circle cx="8" cy="8" r="7" stroke="#fff" strokeWidth="2" strokeDasharray="2.700 2.800" /></Tool>
        <h2 className="mt-auto mb-[6px] rotate-180 text-[8px] leading-[12px] text-white [writing-mode:vertical-rl]">QUICKCALC</h2>
        <Tool label="Calculator palette" className="mb-px w-[12px]" s={10}><path d="M2 1h12v14H2zM5 4h6v2H5zM5 9h6M5 12h6" /></Tool>
      </div>
      <div className="flex min-w-0 flex-1 flex-col pr-[11px] pb-[4px] pl-[12px] text-[8px] text-white">
        <div className="flex h-[29px] items-center">
          <Tool label="Clear" className="w-[15px]" s={11}><path d="M3 1h8v13H3z" {...fill("#eee")} /><path d="M5 4h4M5 7h4" stroke="#666" /><path d="M8 8l6 6M14 8l-6 6" stroke="#e02b20" strokeWidth="2.500" /></Tool>
          <Tool label="Clear history" className="w-[15px]" s={11}><circle cx="7" cy="7" r="6" {...fill("#f2f2f2")} /><path d="M7 3v4h3" stroke="#222" /><path d="M9 9l6 6M15 9l-6 6" stroke="#e02b20" strokeWidth="2.500" /></Tool>
          <Tool label="Paste value" className="w-[16px]" s={11}><path d="M2 2h11v13H2z" {...fill("#e8e8e8")} /><path d="M5 0h5v3H5z" {...fill("#aaa")} /></Tool>
          <span className="mx-[3px] h-[11px] w-px bg-[#828282]" />
          <Tool label="Get coordinates" className="w-[13px]" s={10}><path d="M5 5l6 6M5 5v3M5 5h3M11 13h2" strokeWidth="1" /></Tool>
          <Tool label="Distance" className="w-[16px]" s={12}><path d="M1 2v5M15 2v5M1 4h14" /><path d="M1 9h14v4H1z" {...fill("#e0a545")} /></Tool>
          <Tool label="Angle" className="w-[15px]" s={12}><path d="M3 14V2c7 0 11 5 11 12z" strokeWidth="1" /></Tool>
          <Tool label="Intersection" className="w-[16px]" s={12}><path d="M1 1l14 14M15 1L1 15" strokeWidth="1" /><path d="M5.500 5.500l5 5M10.500 5.500l-5 5" stroke="#2da84a" strokeWidth="2" /></Tool>
          <span className="mx-[2px] h-[11px] w-px bg-[#828282]" />
          <Tool label="Calculator help" className="w-[16px]" s={10}><path d="M1 1h14v14H1z" {...fill("#fff")} /><text x="8" y="13" textAnchor="middle" fontSize="13" fontWeight="700" fontFamily="Noto Sans, sans-serif" {...fill("#222")}>?</text></Tool>
        </div>
        <div className="h-[38px] border border-[#5e5e5e] border-t-[#484848] bg-[#505050]" />
        <input aria-label="Expression" defaultValue="0792.35" className="mt-[3px] h-[14px] w-full bg-[#515151] pl-px font-['Open_Sans',sans-serif] text-[8px] font-bold text-white outline-none" />
        <div className="mt-[2px] flex h-[22px] items-center justify-between pr-[3px] pl-px">
          <span>Basic Calculator Mode</span>
          <Tool label="Less" className="w-[8px]" s={9}><path d="M2 8l6-6 6 6M2 14l6-6 6 6" strokeWidth="1.600" /></Tool>
        </div>
        <div className="flex min-h-0 flex-1">
          <div className="flex min-w-0 flex-1 flex-col gap-[3px] overflow-hidden">
            <Section title="Number Pad" keys={padKeys} />
            <Section title="Scientific" keys={sciKeys} />
          </div>
          <div className="flex w-[12px] shrink-0 flex-col items-center bg-[#f2f2f2] pt-[3px] pb-[2px]">
            <Arrow d="M3 1L6 5H0z" />
            <span className="mt-[3px] flex h-[117px] w-[10px] flex-col items-center justify-center gap-px rounded-[1px] border border-[#999] bg-linear-to-r from-[#f4f4f4] to-[#c6c6c6]">
              <span className="h-px w-[5px] bg-[#777]" /><span className="h-px w-[5px] bg-[#777]" /><span className="h-px w-[5px] bg-[#777]" />
            </span>
            <span className="mt-auto flex"><Arrow d="M3 5L0 1h6z" /></span>
          </div>
        </div>
      </div>
    </section>
  );
}

function CommandLine() {
  return (
    <section className="flex h-[39px] border-b border-[#4a4a4a]">
      <div className="flex w-[15px] shrink-0 flex-col items-center justify-between bg-linear-to-b from-[#8a8a8a] to-[#4a4a4a] py-[2px]">
        <span className="h-[4px] w-[11px] border-y border-dotted border-[#c0c0c0]" />
        <Tool label="Close command line" s={8}><path d="M2 2l12 12M14 2L2 14" stroke="#fff" strokeWidth="2.800" /></Tool>
        <Tool label="Customize command line" s={11}><path d="M14 14L7 7" stroke="#fff" strokeWidth="3" strokeLinecap="round" /><path d="M3 2l3 3-1 2-3-1A4 4 0 108 3.500" stroke="#fff" strokeWidth="2" /></Tool>
      </div>
      <div className="flex min-w-0 flex-1 flex-col font-['Liberation_Mono',monospace] text-[8px]">
        <div className="flex h-[24px] flex-col justify-center border-b border-[#aaa] bg-[#c8c8c8] pl-[2px] leading-[10px] text-[#222]">
          <p>Command: CALCULATOR</p>
          <p>QUICKCALC</p>
        </div>
        <div className="flex flex-1 items-center bg-white pl-[4px]">
          <button type="button" aria-label="Recent commands" className="flex items-center gap-[2px]">
            <span className="flex h-[9px] w-[10px] items-center justify-center border border-[#a8b0ba] bg-[#dfe4ea]"><Ico s={8}><path d="M2 3l5 5-5 5M9 13h5" stroke="#333" strokeWidth="1.800" /></Ico></span>
            <Caret className="text-[#555]" />
          </button>
          <input aria-label="Command" placeholder="Type a command" className="ml-[3px] min-w-0 flex-1 text-[8px] italic outline-none placeholder:text-[#8a8a8a]" />
        </div>
      </div>
    </section>
  );
}

const Grp = ({ children, className = "px-[2px]" }) => <div className={`flex h-[18px] items-center gap-[2px] border border-[#6a6a6a] bg-[#4b4b4b] ${className}`}>{children}</div>;
const BL = "#2d83e6";
const LayoutTab = ({ children, className }) => (
  <button type="button" className={`h-[12px] text-[8px] leading-[12px] [clip-path:polygon(0_0,100%_0,calc(100%-6px)_100%,6px_100%)] ${className}`}>{children}</button>
);
const Person = ({ c }) => <><path d="M8 1v8M8 8l-6 7M8 8l6 7M4 12l4-4 4 4" stroke={c} strokeWidth="2" /><circle cx="8" cy="4" r="2.500" {...fill(c)} /></>;

function StatusBar() {
  return (
    <footer className="flex h-[19px] bg-[#373737] text-[8px] text-white">
      <div className="flex pl-[8px]">
        <LayoutTab className="w-[38px] bg-linear-to-b from-[#6a6a6a] to-[#9a9a9a] font-bold text-white">Model</LayoutTab>
        <LayoutTab className="w-[44px] bg-[#5b5b5b] text-[#ccc]">Layout1</LayoutTab>
        <LayoutTab className="w-[44px] bg-[#5b5b5b] text-[#ccc]">Layout2</LayoutTab>
        <LayoutTab className="w-[18px] bg-[#5b5b5b]">+</LayoutTab>
      </div>
      <div className="ml-auto flex">
        <Grp className="px-[3px]"><button type="button" className="text-[8px]">MODEL</button></Grp>
        <Grp>
          <Tool label="Grid" s={11} className="w-[14px]"><path d="M1 3h14M1 6.500h14M1 10h14M1 13.500h14M3 1v14M6.500 1v14M10 1v14M13.500 1v14" stroke={BL} strokeWidth="1.500" /></Tool>
          <Tool label="Snap" s={11} className="w-[14px]"><path d="M1 2h14M1 5h14M1 8h14M1 11h14M1 14h14" stroke="#bbb" strokeDasharray="1.200 1.800" /></Tool>
          <Caret />
        </Grp>
        <Grp>
          <Tool label="Ortho" s={11} className="w-[13px]"><path d="M2 2v12h12M2 9h5v5" stroke="#bbb" /></Tool>
          <Tool label="Polar" s={12} className="w-[16px]"><circle cx="8" cy="8" r="6" stroke={BL} strokeWidth="2" /><path d="M8 8h7M8 8V4" stroke={BL} strokeWidth="1.800" /></Tool>
          <Caret />
          <Tool label="Isodraft" s={13} className="w-[17px]"><path d="M2 1l12 14M8 1v14" stroke="#aaa" strokeWidth="1.300" /></Tool>
          <Caret />
        </Grp>
        <Grp>
          <Tool label="Object tracking" s={12} className="w-[15px]"><path d="M14 2L2 13h13" stroke={BL} strokeWidth="2" /></Tool>
          <Tool label="Object snap" s={12} className="w-[16px]"><path d="M3 3h11v11H3z" stroke={BL} strokeWidth="1.800" /><circle cx="3" cy="3" r="2.500" {...fill("#39b24a")} /></Tool>
          <Caret />
        </Grp>
        <Grp>
          <Tool label="Annotation visibility" s={12} className="w-[15px]"><Person c={BL} /></Tool>
          <Tool label="Autoscale" s={12} className="w-[15px]"><Person c="#c4c4c4" /></Tool>
          <Tool label="Annotation scale" s={12} className="w-[15px]"><path d="M8 1v7l-6 6M8 8l6 6M8 3v6" stroke="#c4c4c4" strokeWidth="2.500" /></Tool>
          <button type="button" className="flex items-center gap-[3px]">1:1 <Caret /></button>
        </Grp>
        <Grp>
          <button type="button" className="flex items-center gap-[3px] whitespace-nowrap">
            <Ico s={9}><circle cx="8" cy="8" r="4" strokeWidth="4" /><circle cx="8" cy="8" r="7" strokeWidth="2" strokeDasharray="2.700 2.800" /></Ico>
            <span className="ml-[3px]">AutoCAD Classic</span> <Caret />
          </button>
        </Grp>
        <Grp><Tool label="Annotation monitor" s={11} className="w-[11px]"><path d="M8 1v14M1 8h14" stroke="#ddd" strokeWidth="2" /></Tool></Grp>
        <Grp><Tool label="Isolate objects" s={12} className="w-[12px]"><path d="M1 2h6v5H1zM4 7v5h4M11 3l3 5H9z" /><circle cx="11" cy="12" r="2.500" /></Tool></Grp>
        <Grp><Tool label="Graphics performance" s={13} className="w-[12px]"><circle cx="8" cy="8" r="7" fill="#1768c9" stroke="#2d83e6" /><path d="M5 9l2 2 4-5" stroke="#124e9a" /></Tool></Grp>
        <Grp><Tool label="Clean screen" s={13} className="w-[15px]"><path d="M1 2h13v12H1z" {...fill("#f2f2f2")} /><path d="M2 9c2-5 4-5 5-1s3 4 5 0" stroke="#333" /><path d="M12 9l4 6h-6z" {...fill("#e8742a")} /></Tool></Grp>
        <Grp className="px-[2px]">
          <Tool label="Full screen" s={11} className="w-[13px]"><path d="M1 2h14v12H1zM4 11v-3l3 3zM12 5v3L9 5z" strokeWidth="1.500" /></Tool>
          <Tool label="Customization" s={11} className="w-[12px]"><path d="M1 3h14M1 8h14M1 13h14" strokeWidth="2" /></Tool>
        </Grp>
      </div>
    </footer>
  );
}

const tasks = [
  ["Outlook", false, <><path d="M1 1h14v14H1z" {...fill("#f4bf3a")} /><path d="M3 3h10v10H3z" {...fill("#fce9a8")} /><ellipse cx="8" cy="8" rx="2.800" ry="3.500" stroke="#d48a10" strokeWidth="2" /></>],
  ["Explorer", false, <><path d="M2 2h8l1 2h3v7H2z" {...fill("#f2dc84")} /><path d="M1 8h14v4H1z" {...fill("#8ecbe8")} /><path d="M4 11h8v4H4z" {...fill("#f6e7a6")} /></>],
  ["AutoCAD", true, <path d="M1 15L6 1h4l5 14h-4l-1-3H6l-1 3zM7 9h2.500L8.200 4z" fillRule="evenodd" {...fill("#c2202a")} />],
  ["Red tool", false, <><path d="M2 5l3-4h7l3 4v9H2z" {...fill("#7c1f24")} /><path d="M4 7h3v2H4zM9 7h4v2H9zM4 11h3v2H4zM9 11h4v2H9z" {...fill("#f3e6e6")} /><path d="M1 5h14" stroke="#222" /></>],
  ["Solver", true, <><path d="M1 4l5 4-4 7M10 3L4 13" stroke="#333" strokeWidth="2.500" /><path d="M8 1h7v6H8z" {...fill("#a83038")} /><path d="M10 3h3v2h-3z" {...fill("#eee")} /></>],
  ["X tool", false, <><path d="M3 4l8 11M12 4L3 15" stroke="#333" strokeWidth="3" /><circle cx="13" cy="3" r="2" stroke="#d33" /></>],
  ["Paint", false, <><ellipse cx="7" cy="6" rx="6" ry="4.500" fill="#f0f0f0" stroke="#b08a70" /><circle cx="5" cy="5" r="1.500" {...fill("#d24b2c")} /><circle cx="9" cy="6" r="1.500" {...fill("#4a80cc")} /><path d="M8 8l5 6" stroke="#c05030" strokeWidth="2" /></>],
  ["Acrobat", false, <><path d="M1 1h14v14H1z" {...fill("#c8161d")} /><path d="M3 12c5-2 6-7 5-9-1 3 1 7 5 7-4-1-7 0-10 2z" stroke="#fff" strokeWidth="1.200" /></>],
  ["Converter", false, <><path d="M2 6c4-4 8-3 9 0M1 12c3 3 7 3 9-1" stroke="#333" strokeWidth="2" /><path d="M7 5l7 7M14 5l-7 7" stroke="#e22020" strokeWidth="2.500" /></>],
  ["Photos", true, <><circle cx="8" cy="8" r="7.500" {...fill("#fff")} /><circle cx="8" cy="8" r="4" stroke="#e25a3c" strokeWidth="4" strokeDasharray="2 4.300" /><circle cx="8" cy="8" r="4" stroke="#3ba3d8" strokeWidth="4" strokeDasharray="2 4.300" strokeDashoffset="2.100" /><circle cx="8" cy="8" r="4" stroke="#58b368" strokeWidth="3" strokeDasharray="1.500 4.800" strokeDashoffset="4.200" /></>],
  ["Recorder", true, <><path d="M1 2h7v6H1z" {...fill("#e0322e")} /><path d="M8 2h7v6H8z" {...fill("#37a849")} /><path d="M1 8h7v6H1z" {...fill("#8a3cc0")} /><path d="M8 8h7v6H8z" {...fill("#2c62c8")} /><circle cx="8" cy="8" r="3.500" {...fill("#fff")} /></>],
];

function Taskbar() {
  return (
    <footer className="flex h-[20px] border-t border-[#c5d2e6] bg-[#a7bcdc] text-[8px] text-white">
      <div className="flex w-[40px] shrink-0 items-center bg-linear-to-r from-[#6f93bb] to-[#a7bcdc] pl-[7px]">
        <button type="button" aria-label="Start menu">
          <svg viewBox="0 0 22 22" className="size-[21px]" aria-hidden="true">
            <circle cx="11" cy="11" r="10" fill="#2c6593" stroke="#1e4568" />
            <ellipse cx="11" cy="6" rx="7" ry="4" fill="#7db3d6" opacity=".6" />
            <path d="M6 7q2-2 5-1l-1 5q-2-1-5 1z" fill="#ee6a35" />
            <path d="M12 6q2 1 5 0l-1 5q-3 1-5 0z" fill="#8cc63f" />
            <path d="M5 13q2-2 5-1l-1 5q-2-1-5 0z" fill="#3fa0e6" />
            <path d="M11 12q2 1 5 0l-1 5q-3 1-5 0z" fill="#fbc92f" />
          </svg>
        </button>
      </div>
      <div className="flex w-[335px] justify-between">
        {tasks.map(([n, on, d]) => (
          <Tool key={n} label={n} className={on ? "w-[28px] rounded-[2px] border border-[#8399b8] bg-linear-to-b from-[#e3ecf7] to-[#c6d6ea]" : "w-[28px]"} s={12}>{d}</Tool>
        ))}
      </div>
      <div className="ml-auto flex items-center bg-linear-to-r from-[#a7bcdc] via-[#7d92b3] to-[#7d92b3] pl-[22px]">
        <svg viewBox="0 0 6 4" className="h-[3px] w-[5px]" aria-hidden="true"><path d="M0 4h6L3 0z" fill="#fff" /></svg>
        <Tool label="Volume" className="ml-[6px] w-[15px]" s={10}><path d="M1 5h4l4-4v14l-4-4H1z" {...fill("#fff")} /><path d="M11 5q2 3 0 6M13 3q3 5 0 10" stroke="#fff" /></Tool>
        <time className="ml-[20px]">10:29</time>
        <button type="button" aria-label="Show desktop" className="ml-[16px] h-full w-[10px] border-l border-[#4c607e] bg-linear-to-b from-[#5c7090] to-[#8fa3c2]" />
      </div>
    </footer>
  );
}

export default function App() {
  return (
    <div className="relative flex min-h-screen flex-col overflow-hidden bg-[#5b5b5b] font-['Roboto','Noto_Sans',sans-serif] text-[8px]">
      <Header />
      <div className="flex h-[18px] items-end gap-[4px] bg-[#383838] pl-[12px]">
        <button type="button" className="h-[15px] w-[84px] bg-[#4d4d4d] pl-[10px] text-left text-[8px] text-[#b5b5b5] [clip-path:polygon(7px_0,calc(100%-4px)_0,100%_100%,0_100%)]">Start</button>
        <button type="button" aria-label="Drawing1 tab" className="h-[15px] w-[78px] rounded-t-[2px] bg-[#6a6a6a]" />
      </div>
      <Toolbars />
      <Workspace />
      <CommandLine />
      <StatusBar />
      <Taskbar />
      <QuickCalc />
      <div className="absolute bottom-[14px] left-1/2 flex h-[40px] w-[30px] -translate-x-1/2 items-center justify-center border border-[#e2e2e2] bg-black/60 font-['Noto_Sans',sans-serif] text-[20px] text-white">5</div>
    </div>
  );
}
